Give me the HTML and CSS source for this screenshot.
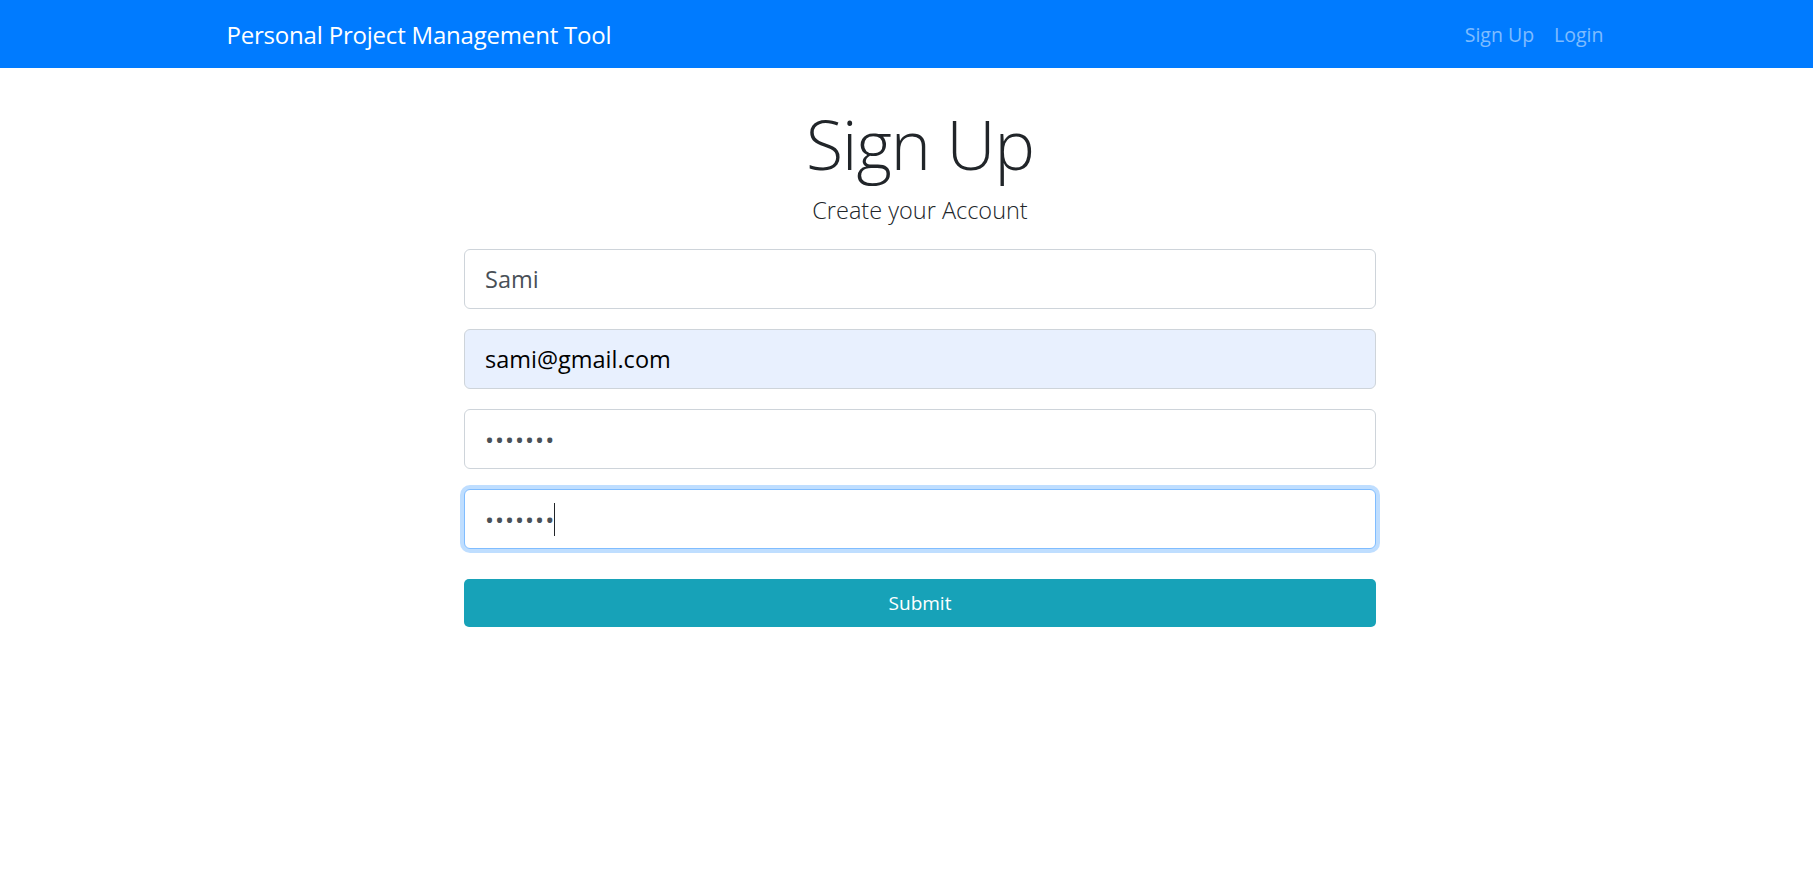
FILE: index.html
```html
<!DOCTYPE html>
<html lang="en">
<head>
<meta charset="utf-8">
<title>Sign Up - Personal Project Management Tool</title>
<link rel="stylesheet" href="styles.css">
</head>
<body>
<nav class="navbar">
  <div class="container nav-inner">
    <a class="brand" href="#">Personal Project Management Tool</a>
    <ul class="nav-links">
      <li><a href="#">Sign Up</a></li>
      <li><a href="#">Login</a></li>
    </ul>
  </div>
</nav>
<main class="container main">
  <div class="form-col">
    <h1 class="title">Sign Up</h1>
    <p class="lead">Create your Account</p>
    <form class="form">
      <div class="field">Sami</div>
      <div class="field autofill">sami@gmail.com</div>
      <div class="field dots">•••••••</div>
      <div class="field dots focused">•••••••<span class="caret"></span></div>
      <button type="button" class="btn-submit">Submit</button>
    </form>
  </div>
</main>
</body>
</html>
```
FILE: styles.css
```css
* { box-sizing: border-box; }
html, body { margin: 0; }
body {
  padding-left: 27px;
  font-family: "Open Sans", "Noto Sans", "Liberation Sans", sans-serif;
  color: #212529;
  background: #fff;
}
.container {
  width: 1425px;
  margin: 0 auto;
  padding: 0 19px;
}
.navbar {
  background: #007bff;
  margin-left: -27px;
  padding-left: 27px;
}
.nav-inner {
  height: 68px;
  display: flex;
  align-items: center;
  justify-content: space-between;
}
.brand {
  color: #fff;
  text-decoration: none;
  font-size: 24px;
  letter-spacing: -0.2px;
}
.nav-links {
  list-style: none;
  margin: 0;
  padding: 0;
  display: flex;
}
.nav-links a {
  display: block;
  padding: 0 10px;
  color: rgba(255,255,255,.5);
  text-decoration: none;
  font-size: 19.5px;
}
.main { display: flex; justify-content: center; }
.form-col { width: 912px; }
.title {
  margin: 0;
  padding-top: 34px;
  text-align: center;
  font-weight: 300;
  font-size: 68px;
  line-height: 84px;
  letter-spacing: -1px;
}
.lead {
  margin: 6px 0 0;
  text-align: center;
  font-weight: 300;
  font-size: 23.5px;
  line-height: 36px;
}
.form {
  margin-top: 21px;
  display: flex;
  flex-direction: column;
}
.field {
  height: 60px;
  border: 1px solid #ced4da;
  border-radius: 6px;
  padding: 0 20px;
  display: flex;
  align-items: center;
  font-size: 23.5px;
  color: #495057;
  margin-bottom: 20px;
  background: #fff;
}
.autofill {
  background: #e8f0fe;
  color: #000;
}
.dots {
  font-size: 24px;
  letter-spacing: 1px;
  color: #495057;
}
.focused {
  border-color: #80bdff;
  box-shadow: 0 0 0 4px rgba(0,123,255,.25);
  margin-bottom: 30px;
}
.caret {
  display: inline-block;
  width: 1px;
  height: 33px;
  background: #212529;
  margin-left: -1px;
}
.btn-submit {
  height: 48px;
  border: 0;
  border-radius: 5px;
  background: #17a2b8;
  color: #fff;
  font-family: inherit;
  font-size: 19px;
  cursor: pointer;
}
```
